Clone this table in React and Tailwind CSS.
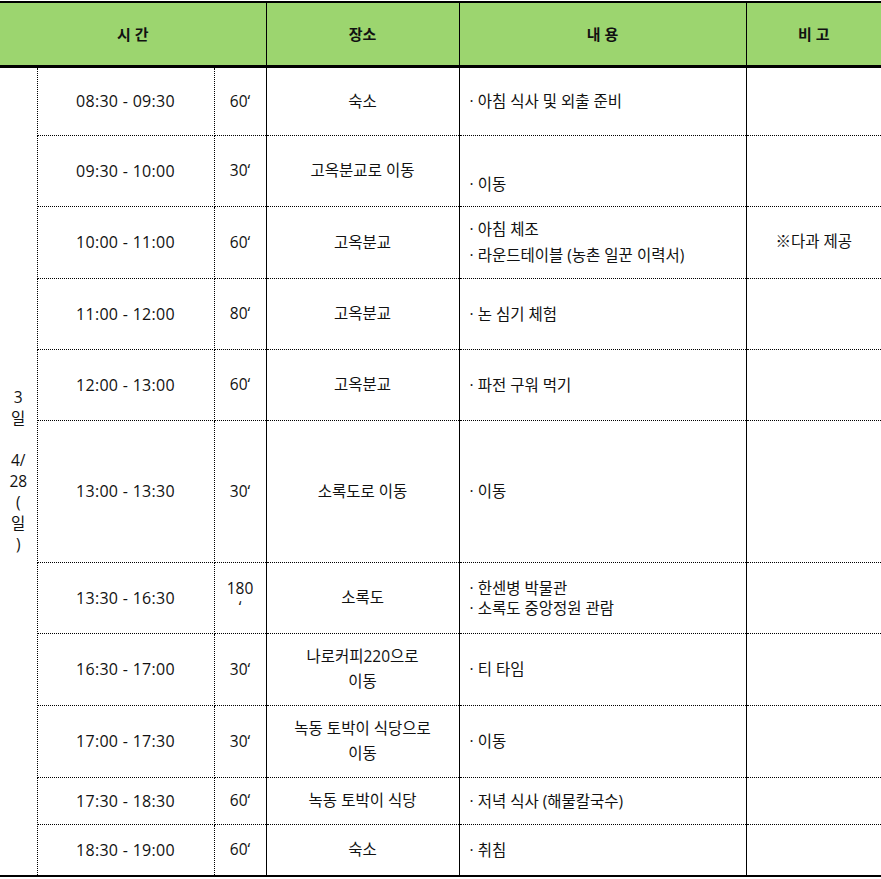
import React from "react";

const rows = [
  { time: "08:30 - 09:30", min: ["60‘"], place: ["숙소"], content: ["· 아침 식사 및 외출 준비"], cl: "leading-[22px]", h: "h-[69px]" },
  { time: "09:30 - 10:00", min: ["30‘"], place: ["고옥분교로 이동"], content: ["\u00a0", "· 이동"], cl: "leading-[26px]", h: "h-[71px]" },
  { time: "10:00 - 11:00", min: ["60‘"], place: ["고옥분교"], content: ["· 아침 체조", "· 라운드테이블 (농촌 일꾼 이력서)"], cl: "leading-[26px]", remark: "※다과 제공", h: "h-[72px]" },
  { time: "11:00 - 12:00", min: ["80‘"], place: ["고옥분교"], content: ["· 논 심기 체험"], cl: "leading-[22px]", h: "h-[71px]" },
  { time: "12:00 - 13:00", min: ["60‘"], place: ["고옥분교"], content: ["· 파전 구워 먹기"], cl: "leading-[22px]", h: "h-[71px]" },
  { time: "13:00 - 13:30", min: ["30‘"], place: ["소록도로 이동"], content: ["· 이동"], cl: "leading-[22px]", h: "h-[142px]" },
  { time: "13:30 - 16:30", min: ["180", "‘"], place: ["소록도"], content: ["· 한센병 박물관", "· 소록도 중앙정원 관람"], cl: "leading-[20px]", h: "h-[71px]" },
  { time: "16:30 - 17:00", min: ["30‘"], place: ["나로커피220으로", "이동"], content: ["· 티 타임"], cl: "leading-[22px]", h: "h-[72px]" },
  { time: "17:00 - 17:30", min: ["30‘"], place: ["녹동 토박이 식당으로", "이동"], content: ["· 이동"], cl: "leading-[22px]", h: "h-[72px]" },
  { time: "17:30 - 18:30", min: ["60‘"], place: ["녹동 토박이 식당"], content: ["· 저녁 식사 (해물칼국수)"], cl: "leading-[22px]", h: "h-[47px]" },
  { time: "18:30 - 19:00", min: ["60‘"], place: ["숙소"], content: ["· 취침"], cl: "leading-[22px]", h: "h-[52px]" },
];

function Lines({ items, className }) {
  return (
    <div className={className}>
      {items.map((t, i) => (
        <div key={i}>{t}</div>
      ))}
    </div>
  );
}

export default function App() {
  const last = rows.length - 1;
  return (
    <div className="w-[881px] pt-px bg-white font-['Open_Sans','Noto_Sans_CJK_KR',sans-serif] text-[15.5px] text-[#111]">
      <table className="w-[881px] table-fixed border-collapse">
        <colgroup>
          <col className="w-[37px]" />
          <col className="w-[177px]" />
          <col className="w-[52px]" />
          <col className="w-[193px]" />
          <col className="w-[287px]" />
          <col className="w-[135px]" />
        </colgroup>
        <thead>
          <tr className="h-[64px]">
            <th colSpan={3} className="bg-[#9cd56f] border-t-2 border-b-[3px] border-t-black border-b-black border-b-double border-r border-r-black font-bold text-[15px] align-middle p-0">
              시 간
            </th>
            <th className="bg-[#9cd56f] border-t-2 border-b-[3px] border-t-black border-b-black border-b-double border-r border-r-black font-bold text-[15px] align-middle p-0">
              장소
            </th>
            <th className="bg-[#9cd56f] border-t-2 border-b-[3px] border-t-black border-b-black border-b-double border-r border-r-black font-bold text-[15px] align-middle p-0">
              내 용
            </th>
            <th className="bg-[#9cd56f] border-t-2 border-b-[3px] border-t-black border-b-black border-b-double font-bold text-[15px] align-middle p-0">
              비 고
            </th>
          </tr>
        </thead>
        <tbody>
          {rows.map((r, i) => {
            const bottom = i === last ? "border-b-2 [border-bottom-style:solid]" : "border-b";
            return (
              <tr key={i} className={r.h}>
                {i === 0 && (
                  <td rowSpan={rows.length} className="border-r border-dotted border-black border-b-2 [border-bottom-style:solid] align-middle text-center p-0 leading-[21px]">
                    <Lines items={["3", "일", "\u00a0", "4/", "28", "(", "일", ")"]} />
                  </td>
                )}
                <td className={`border-r border-t border-dotted border-black ${bottom} text-center align-middle p-0 text-[16px] tracking-[0.3px]`}>
                  {r.time}
                </td>
                <td className={`border-r border-t border-dotted border-black [border-right-style:solid] ${bottom} text-center align-middle p-0`}>
                  <Lines items={r.min} className="leading-[19px]" />
                </td>
                <td className={`border-r border-t border-dotted border-black [border-right-style:solid] ${bottom} text-center align-middle p-0`}>
                  <Lines items={r.place} className="leading-[25px]" />
                </td>
                <td className={`border-r border-t border-dotted border-black [border-right-style:solid] ${bottom} text-left align-middle py-0 pl-[10px] pr-2`}>
                  <Lines items={r.content} className={r.cl} />
                </td>
                <td className={`border-t border-dotted border-black ${bottom} text-center align-middle p-0`}>
                  {r.remark || ""}
                </td>
              </tr>
            );
          })}
        </tbody>
      </table>
    </div>
  );
}
